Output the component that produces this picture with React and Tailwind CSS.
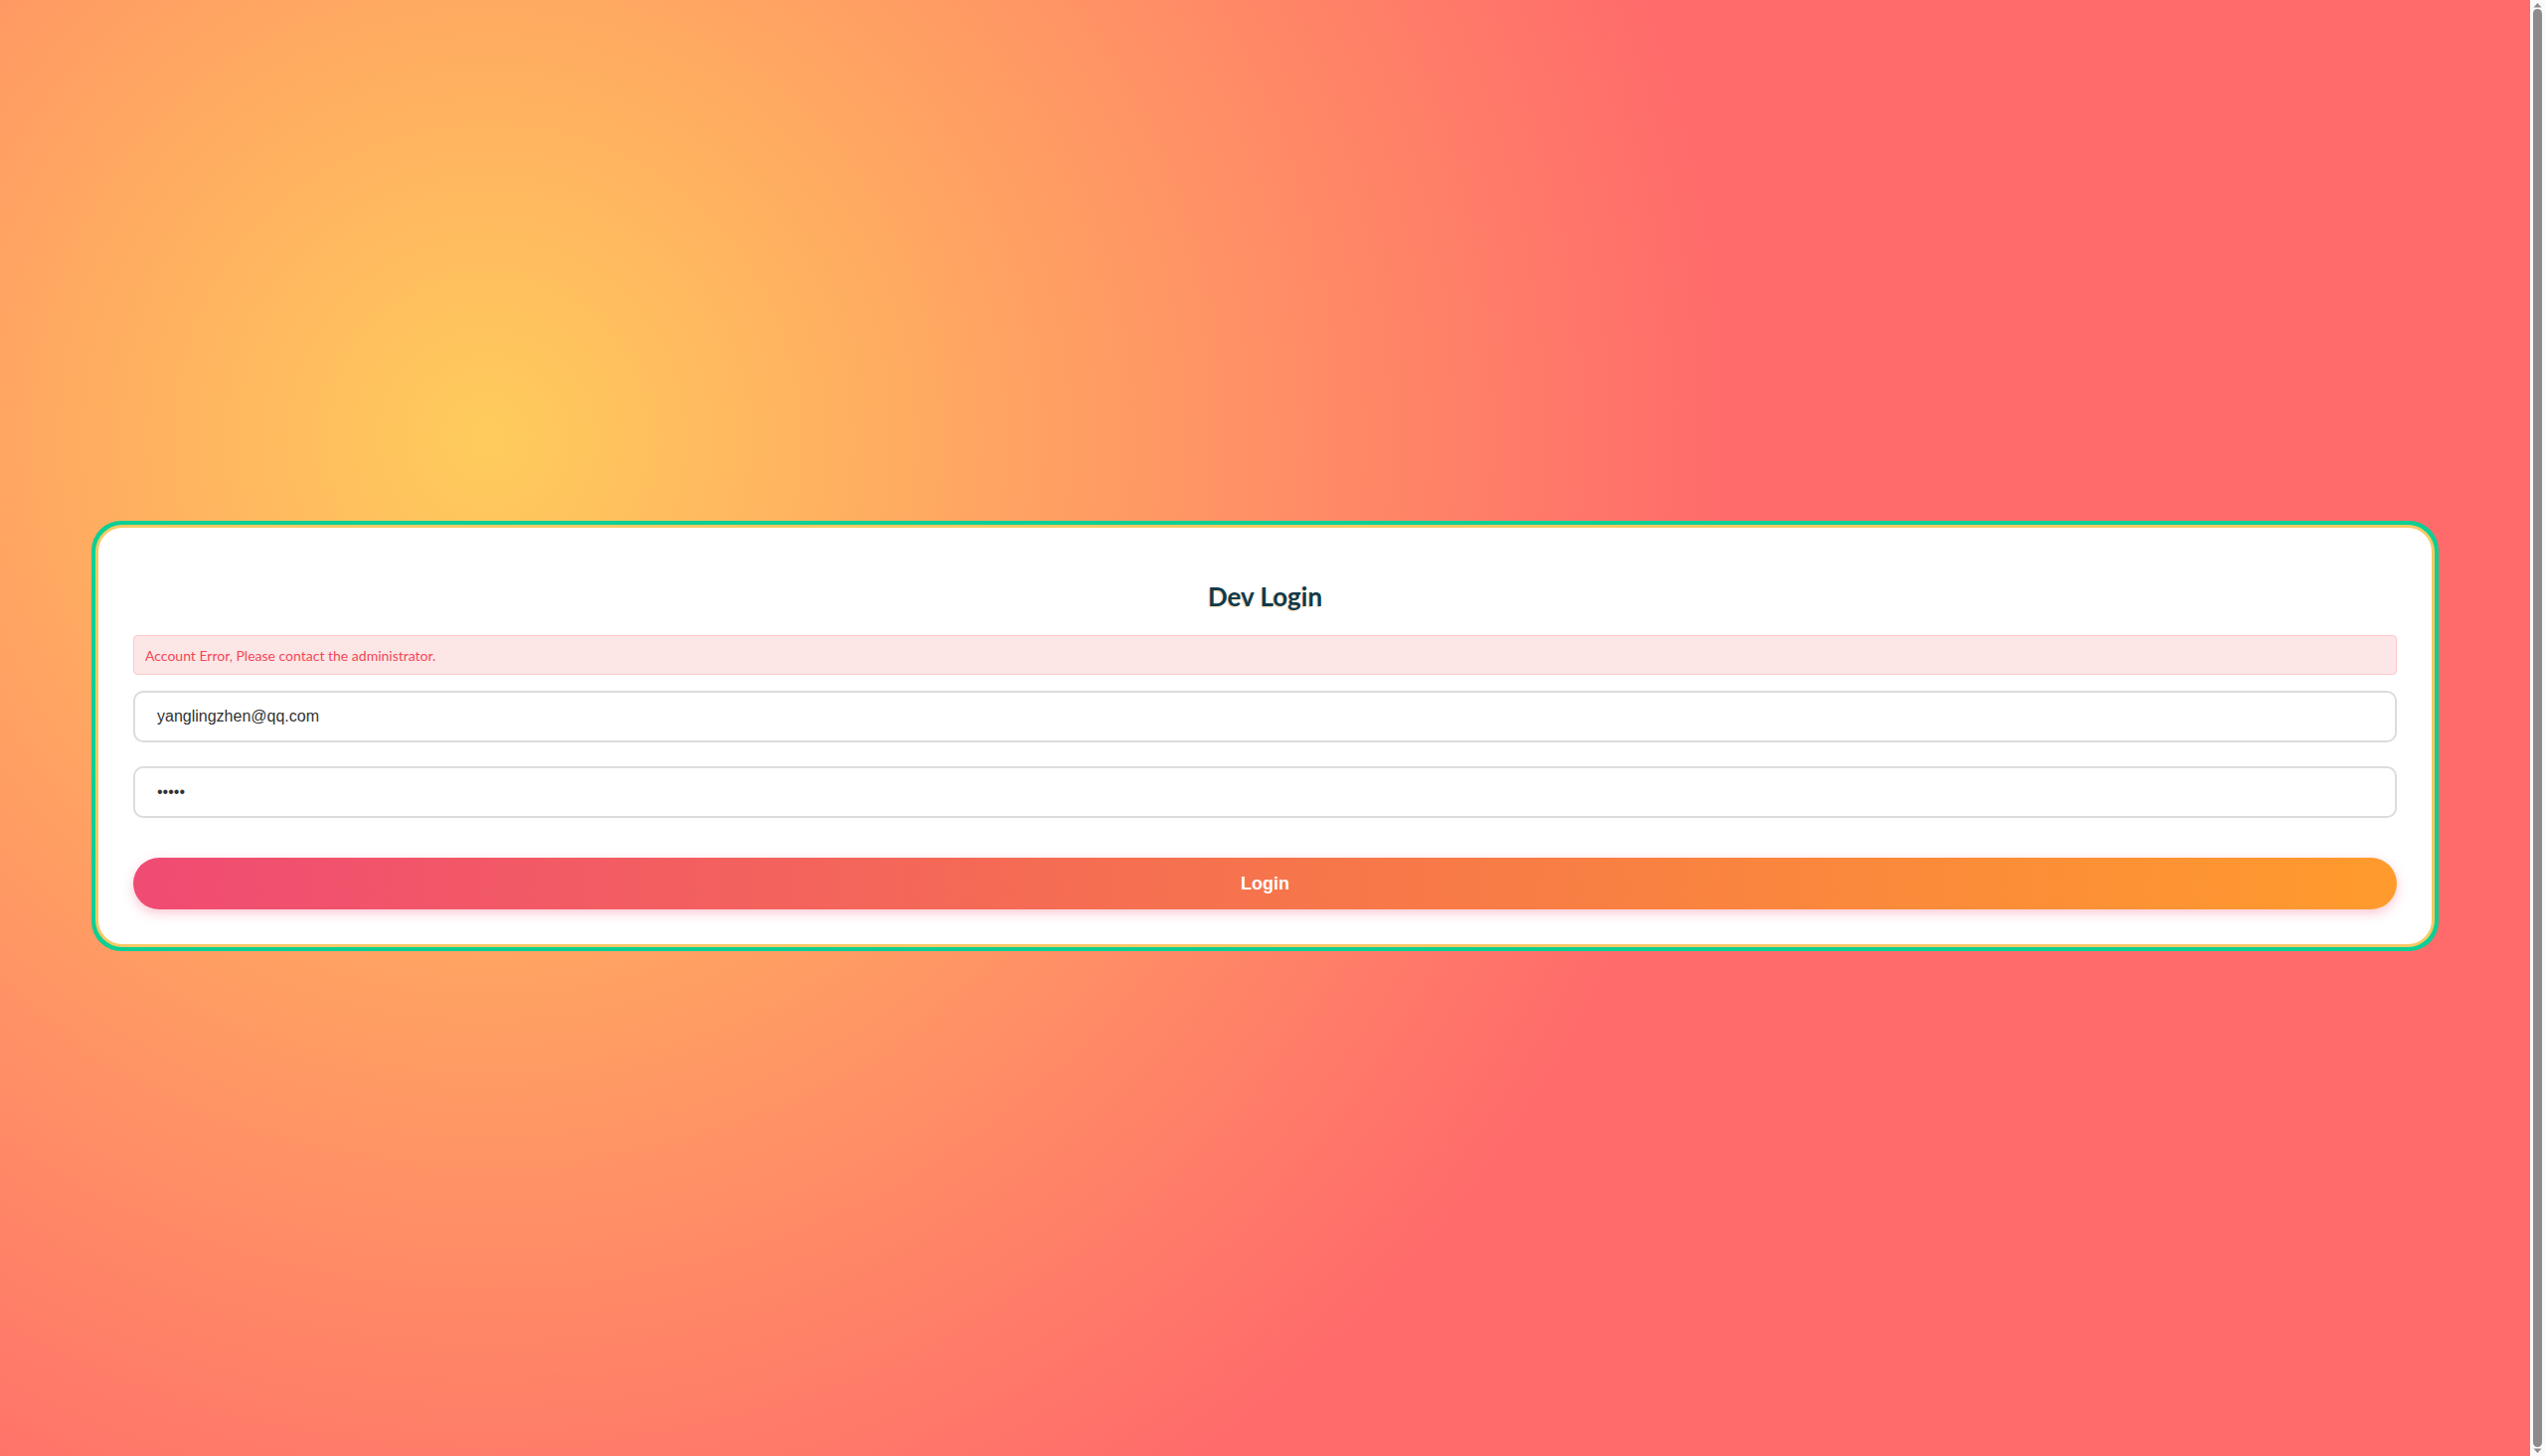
import { useState } from 'react';

const FakeScrollbar = () => (
  <div className="w-[15px] h-screen shrink-0 flex flex-col items-center bg-[#fafafa]">
    <svg width="9" height="6" viewBox="0 0 9 6" className="mt-[2px]">
      <path d="M0.5 5.5 L4.5 1 L8.5 5.5 Z" fill="#8c8c8c" />
    </svg>
    <div className="flex-1 w-[9px] my-[1px] rounded-full bg-[#8c8c8c]" />
    <svg width="9" height="6" viewBox="0 0 9 6" className="mb-[2px]">
      <path d="M0.5 0.5 L4.5 5 L8.5 0.5 Z" fill="#8c8c8c" />
    </svg>
  </div>
);

const LoginPage = () => {
  const [email, setEmail] = useState('yanglingzhen@qq.com');
  const [password, setPassword] = useState('12345');
  const [error] = useState('Account Error, Please contact the administrator.');

  return (
    <div className="flex-1 h-screen pt-[16px] flex items-center bg-[radial-gradient(circle_at_490px_441px,#ffcc5c_0px,#ff6b6b_1250px)]">
      <div className="mx-[92px] flex-1 rounded-[30px] bg-[#0ccf94] p-[4px]">
        <div className="rounded-[27px] bg-[#f7c965] p-[3px]">
          <div className="rounded-[24px] bg-white px-[35px] pt-[49px] pb-[35px]">
            <h1 className="h-[40px] mb-[19px] text-center text-[26px] leading-[40px] font-bold text-[#0f3b4c] font-['Lato','Noto_Sans',sans-serif] [text-shadow:-1px_1px_1px_rgba(255,170,70,0.45)]">
              Dev Login
            </h1>

            {error && (
              <div className="h-[40px] mb-[16px] flex items-center px-[11px] rounded-[4px] border border-[#fcc8cb] bg-[#fde6e6] text-[14px] text-[#f2475a] font-['Lato','Noto_Sans',sans-serif]">
                {error}
              </div>
            )}

            <input
              type="email"
              value={email}
              onChange={(e) => setEmail(e.target.value)}
              className="block w-full h-[52px] mb-[24px] px-[22px] rounded-[10px] border-2 border-[#dcdcdc] bg-white text-[16px] text-[#333] font-['Liberation_Sans',Arial,sans-serif] outline-none"
            />

            <input
              type="password"
              value={password}
              onChange={(e) => setPassword(e.target.value)}
              className="block w-full h-[52px] mb-[40px] px-[22px] rounded-[10px] border-2 border-[#dcdcdc] bg-white text-[16px] text-[#333] font-['Liberation_Sans',Arial,sans-serif] outline-none"
            />

            <button
              type="button"
              className="block w-full h-[52px] rounded-full bg-[linear-gradient(90deg,#f04b73,#f6744c_50%,#ff9b2d)] text-white text-[18px] font-bold font-['Liberation_Sans',Arial,sans-serif] shadow-[0_4px_12px_rgba(240,76,114,0.3)]"
            >
              Login
            </button>
          </div>
        </div>
      </div>
    </div>
  );
};

export default function App() {
  return (
    <div className="flex h-screen overflow-hidden">
      <LoginPage />
      <FakeScrollbar />
    </div>
  );
}
